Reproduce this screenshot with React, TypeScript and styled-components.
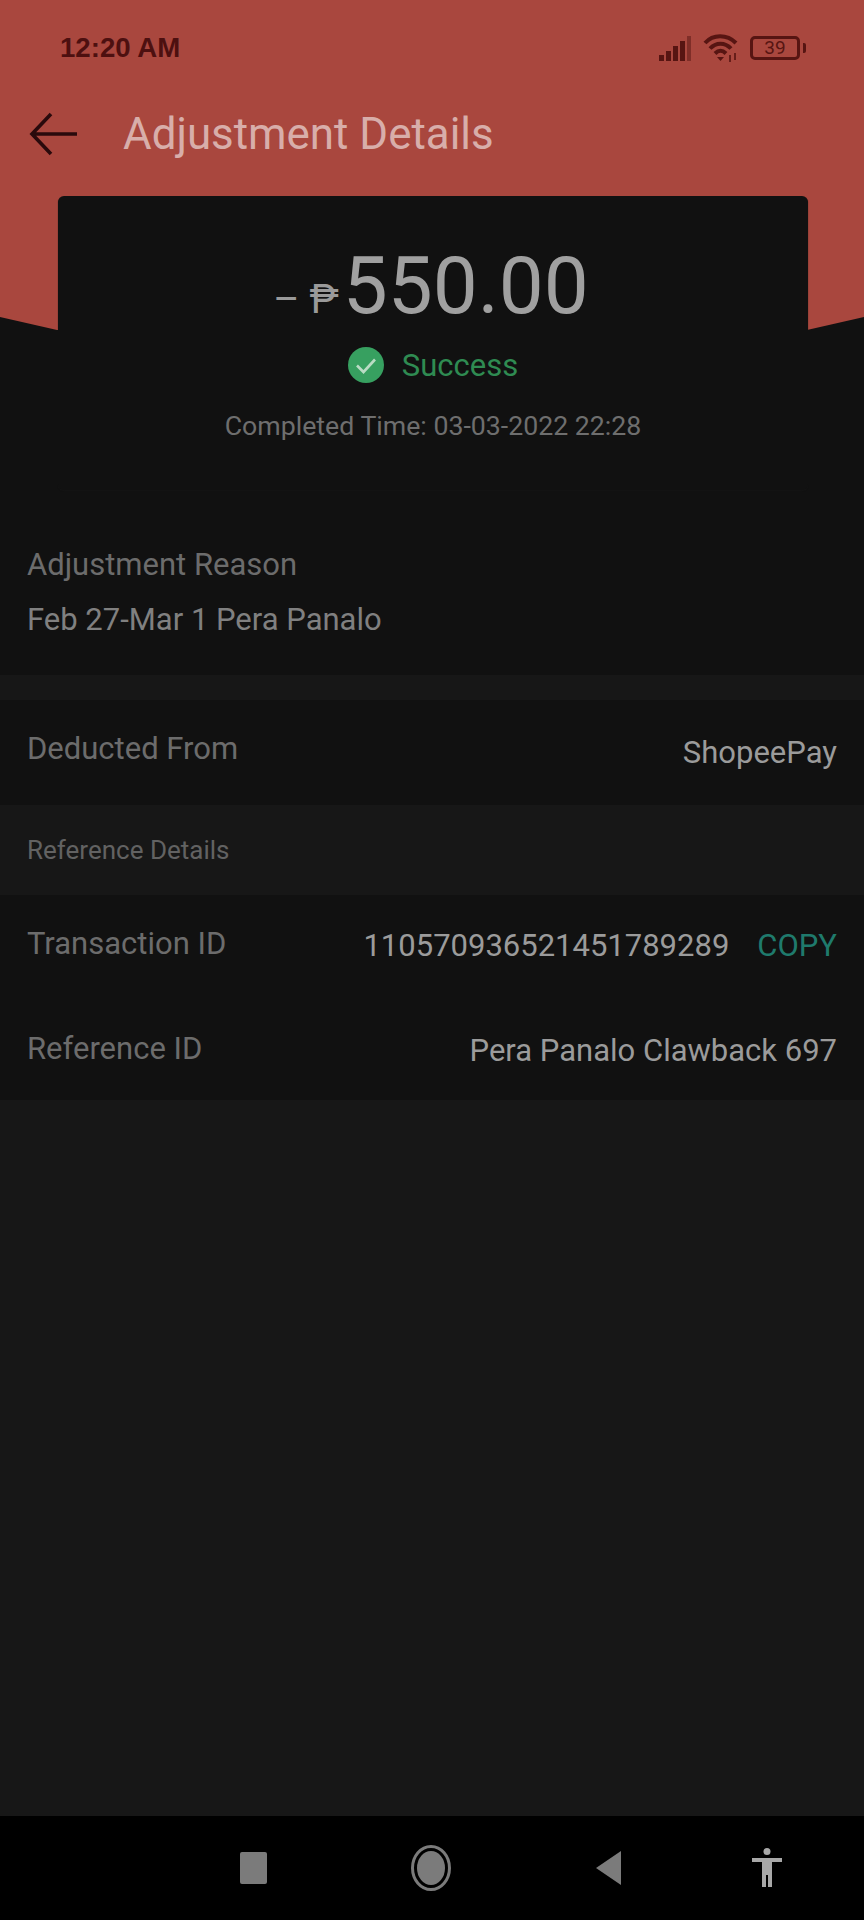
import styled, { createGlobalStyle } from 'styled-components';

const GlobalStyle = createGlobalStyle`
  html, body {
    margin: 0;
    padding: 0;
    background: #171717;
  }
  * {
    box-sizing: border-box;
  }
`;

const Screen = styled.div`
  width: 864px;
  height: 1920px;
  display: flex;
  flex-direction: column;
  background: #171717;
  font-family: Roboto, 'Liberation Sans', sans-serif;
  overflow: hidden;
`;

const Main = styled.div`
  flex: 1;
  display: flex;
  flex-direction: column;
`;

const TopArea = styled.div`
  background: #111111;
  height: 675px;
`;

const Header = styled.header`
  height: 340px;
  background: #a9473e;
  clip-path: polygon(0 0, 100% 0, 100% 317px, 807px 330px, 57px 330px, 0 317px);
`;

const StatusBar = styled.div`
  height: 96px;
  padding: 30px 0 0 60px;
  display: flex;
  justify-content: space-between;
`;

const Clock = styled.div`
  font-size: 27.6px;
  line-height: 36px;
  font-weight: 700;
  font-family: 'Liberation Sans', Arial, sans-serif;
  color: #4d1010;
`;

const StatusIcons = styled.div`
  display: flex;
  align-items: center;
  height: 36px;
  gap: 11px;
  padding-right: 64px;
`;

const Battery = styled.div`
  position: relative;
  width: 50px;
  height: 24px;
  border: 3px solid #571512;
  border-radius: 5px;
  font-size: 19px;
  line-height: 18px;
  text-align: center;
  color: #571512;

  &::after {
    content: '';
    position: absolute;
    right: -9px;
    top: 4px;
    width: 3px;
    height: 10px;
    border-radius: 0 2px 2px 0;
    background: #571512;
  }
`;

const TitleBar = styled.div`
  display: flex;
  align-items: center;
  height: 76px;
  padding-left: 29px;
  gap: 45px;
`;

const Title = styled.h1`
  margin: 0;
  font-size: 43.9px;
  line-height: 76px;
  font-weight: 400;
  color: #d8aeaa;
`;

const Card = styled.section`
  margin: -144px 56px 0 58px;
  height: 294px;
  position: relative;
  border-radius: 6px;
  background: #111111;
  box-shadow: 0 1px 1px #141414;
  display: flex;
  flex-direction: column;
  align-items: center;
  padding-top: 45px;
`;

const Amount = styled.div`
  display: flex;
  align-items: baseline;
  gap: 4px;
  margin-right: 4px;
  color: #a0a0a0;
  height: 90px;
`;

const Sign = styled.span`
  font-size: 40px;
  line-height: 90px;
  color: #9a9a9a;
`;

const Value = styled.span`
  font-size: 80px;
  line-height: 90px;
  font-weight: 400;
`;

const StatusRow = styled.div`
  display: flex;
  align-items: center;
  gap: 18px;
  margin-top: 16px;
  height: 36px;
  font-size: 31px;
  color: #2f8b52;
`;

const Completed = styled.div`
  margin-top: 28px;
  font-size: 26.7px;
  line-height: 30px;
  color: #6e6e6e;
`;

const Reason = styled.div`
  padding: 57px 27px 0;
`;

const ReasonLabel = styled.div`
  font-size: 31px;
  line-height: 36px;
  color: #6c6c6c;
`;

const ReasonValue = styled.div`
  margin-top: 19px;
  font-size: 31px;
  line-height: 36px;
  color: #808080;
`;

const Rows = styled.div<{ $height: number; $mt?: number }>`
  background: #111111;
  height: ${(p) => p.$height}px;
  margin-top: ${(p) => p.$mt ?? 0}px;
  padding: 0 27px;
  display: flex;
  flex-direction: column;
`;

const Row = styled.div<{ $height: number; $pt?: number }>`
  height: ${(p) => p.$height}px;
  padding-top: ${(p) => p.$pt ?? 0}px;
  display: flex;
  align-items: center;
  justify-content: space-between;
`;

const Label = styled.div<{ $shift: number }>`
  font-size: 31px;
  line-height: 36px;
  margin-top: ${(p) => p.$shift}px;
  color: #6c6c6c;
`;

const RowValue = styled.div`
  font-size: 31px;
  line-height: 36px;
  color: #9b9b9b;
  display: flex;
  gap: 28px;
`;

const CopyLink = styled.span`
  color: #1f7a6c;
`;

const SectionTitle = styled.div`
  height: 90px;
  padding: 0 27px;
  display: flex;
  align-items: center;
  font-size: 26px;
  color: #626262;
`;

const NavBar = styled.nav`
  height: 104px;
  background: #000;
  padding-left: 164px;
  display: grid;
  grid-template-columns: 178px 178px 176px 142px;
  align-items: center;
  justify-items: center;
`;

const SignalIcon = () => (
  <svg width="34" height="30" viewBox="0 0 34 30">
    <rect x="1" y="22" width="5" height="6" fill="#571512" />
    <rect x="8" y="18" width="5" height="10" fill="#571512" />
    <rect x="15" y="13" width="5" height="15" fill="#571512" />
    <rect x="22" y="8" width="5" height="20" fill="#571512" />
    <rect x="29" y="3" width="4" height="25" fill="#7f2e28" />
  </svg>
);

const WifiIcon = () => (
  <svg width="36" height="30" viewBox="0 0 36 30" fill="none" stroke="#571512" strokeWidth="4">
    <path d="M2 10 C10 1 24 1 33 10" />
    <path d="M7 15.5 C13 9 22 9 28 15.5" />
    <path d="M12 20.5 C15.5 17 19.5 17 23 20.5" />
    <path d="M14 24 L21 24 L17.5 28 Z" fill="#571512" stroke="none" />
    <path d="M27 22 V29 M32 20 V27" strokeWidth="1.6" />
  </svg>
);

const CheckBadge = () => (
  <svg width="36" height="36" viewBox="0 0 36 36">
    <circle cx="18" cy="18" r="18" fill="#37a060" />
    <path d="M9 18.5 L15.5 25 L27 12.5" fill="none" stroke="#b9dcc4" strokeWidth="2.6" />
  </svg>
);

export default function App() {
  return (
    <Screen>
      <GlobalStyle />
      <Main>
        <TopArea>
          <Header>
            <StatusBar>
              <Clock>12:20 AM</Clock>
              <StatusIcons>
                <SignalIcon />
                <WifiIcon />
                <Battery>39</Battery>
              </StatusIcons>
            </StatusBar>
            <TitleBar>
              <svg width="49" height="44" viewBox="0 0 49 44" fill="none" stroke="#2a0a0c" strokeWidth="3.6">
                <path d="M48 22 H3 M22 2 L3 22 L22 42" />
              </svg>
              <Title>Adjustment Details</Title>
            </TitleBar>
          </Header>
          <Card>
            <Amount>
              <Sign>– ₱</Sign>
              <Value>550.00</Value>
            </Amount>
            <StatusRow>
              <CheckBadge />
              Success
            </StatusRow>
            <Completed>Completed Time: 03-03-2022 22:28</Completed>
          </Card>
          <Reason>
            <ReasonLabel>Adjustment Reason</ReasonLabel>
            <ReasonValue>Feb 27-Mar 1 Pera Panalo</ReasonValue>
          </Reason>
        </TopArea>
        <Rows $height={105} $mt={25}>
          <Row $height={105}>
            <Label $shift={-8}>Deducted From</Label>
            <RowValue>ShopeePay</RowValue>
          </Row>
        </Rows>
        <SectionTitle>Reference Details</SectionTitle>
        <Rows $height={205}>
          <Row $height={102}>
            <Label $shift={-4}>Transaction ID</Label>
            <RowValue>
              110570936521451789289
              <CopyLink>COPY</CopyLink>
            </RowValue>
          </Row>
          <Row $height={103} $pt={4}>
            <Label $shift={-4}>Reference ID</Label>
            <RowValue>Pera Panalo Clawback 697</RowValue>
          </Row>
        </Rows>
      </Main>
      <NavBar>
        <svg width="27" height="32" viewBox="0 0 27 32">
          <rect width="27" height="32" rx="2" fill="#7b7b7b" />
        </svg>
        <svg width="40" height="46" viewBox="0 0 40 46">
          <ellipse cx="20" cy="23" rx="18.5" ry="21.5" fill="none" stroke="#7b7b7b" strokeWidth="3" />
          <ellipse cx="20" cy="23" rx="14" ry="17" fill="#7b7b7b" />
        </svg>
        <svg width="26" height="36" viewBox="0 0 26 36">
          <path d="M26 1 V35 L1 18 Z" fill="#7b7b7b" />
        </svg>
        <svg width="30" height="40" viewBox="0 0 30 40">
          <circle cx="15" cy="3.5" r="3.5" fill="#a8a8a8" />
          <path d="M0 10 H30 V14 H20 V39 H16 V27 H14 V39 H10 V14 H0 Z" fill="#a8a8a8" />
        </svg>
      </NavBar>
    </Screen>
  );
}
